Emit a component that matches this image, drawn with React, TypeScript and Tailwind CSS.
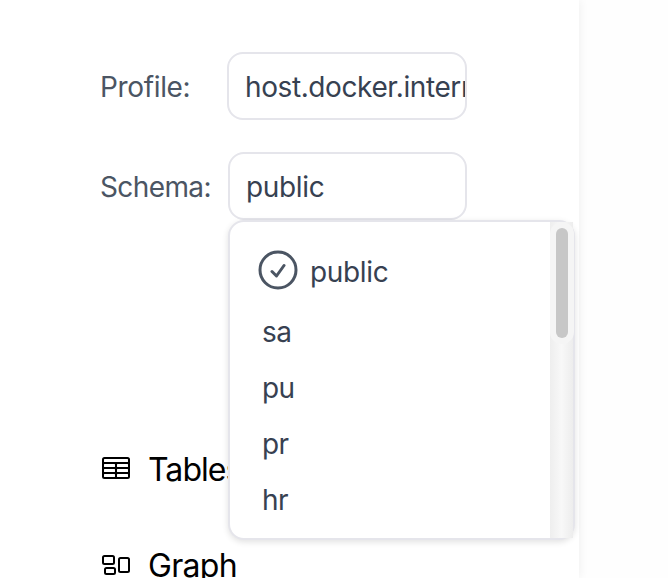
import { HiOutlineCheckCircle, HiOutlineRectangleGroup, HiOutlineTableCells } from "react-icons/hi2";

const schemas = ["sa", "pu", "pr", "hr"];

function SchemaMenu() {
  return (
    <div className="absolute top-[68px] left-0 z-10 flex h-[320px] w-[347px] rounded-2xl border-2 border-[#e5e5eb] bg-white shadow-[0_2px_6px_rgba(0,0,0,0.12)]">
      <ul className="flex-1 pt-[20px] pl-[24px] text-[#374151]">
        <li className="flex h-[60px] items-center">
          <HiOutlineCheckCircle className="-mt-1 size-12 text-[#4b5563]" />
          <span className="ml-2 tracking-[-0.35px]">public</span>
        </li>
        {schemas.map((name) => (
          <li key={name} className="flex h-[56px] items-center pt-[3px] pl-2 tracking-[-0.6px]">
            {name}
          </li>
        ))}
      </ul>
      <div className="flex h-[316px] w-[23px] justify-center bg-linear-to-r from-[#eeeeee] via-[#f8f8f8] to-[#ededed] pt-1.5">
        <div className="h-[110px] w-3 rounded-full bg-[#c7c7c7] shadow-[0_0_0_6px_#f5f5f5]" />
      </div>
    </div>
  );
}

export default function App() {
  return (
    <div className="flex h-[578px] w-[668px] overflow-hidden bg-[#fefefe] font-['Inter',sans-serif] text-[28px] leading-10 antialiased">
      <aside className="h-full w-[579px] bg-white pt-[52px] pl-[100px] shadow-[0_0_10px_rgba(0,0,0,0.07)]">
        <div className="flex h-[68px] items-center">
          <label className="w-[127px] pt-px tracking-[-0.35px] text-[#4b5563]">Profile:</label>
          <div className="flex h-[68px] w-[240px] items-center overflow-hidden rounded-2xl border-2 border-[#e5e5eb] pt-px pl-4 tracking-[-0.4px] whitespace-nowrap text-[#374151]">
            host.docker.internal
          </div>
        </div>
        <div className="mt-8 flex h-[68px] items-center">
          <label className="w-[128px] pt-px tracking-[-0.6px] text-[#4b5563]">Schema:</label>
          <div className="relative">
            <div className="flex h-[68px] w-[239px] items-center rounded-2xl border-2 border-[#e5e5eb] pt-px pl-4 tracking-[-0.35px] text-[#374151]">
              public
            </div>
            <SchemaMenu />
          </div>
        </div>
        <nav className="mt-[224px] flex flex-col gap-12 text-[32px] leading-[48px] text-black">
          <a className="flex h-12 items-center gap-4">
            <HiOutlineTableCells className="size-8" />
            <span className="pt-[3px] tracking-[-0.95px]">Tables</span>
          </a>
          <a className="flex h-12 items-center gap-4">
            <HiOutlineRectangleGroup className="size-8" />
            <span className="pt-[3px] tracking-[-0.7px]">Graph</span>
          </a>
        </nav>
      </aside>
    </div>
  );
}
